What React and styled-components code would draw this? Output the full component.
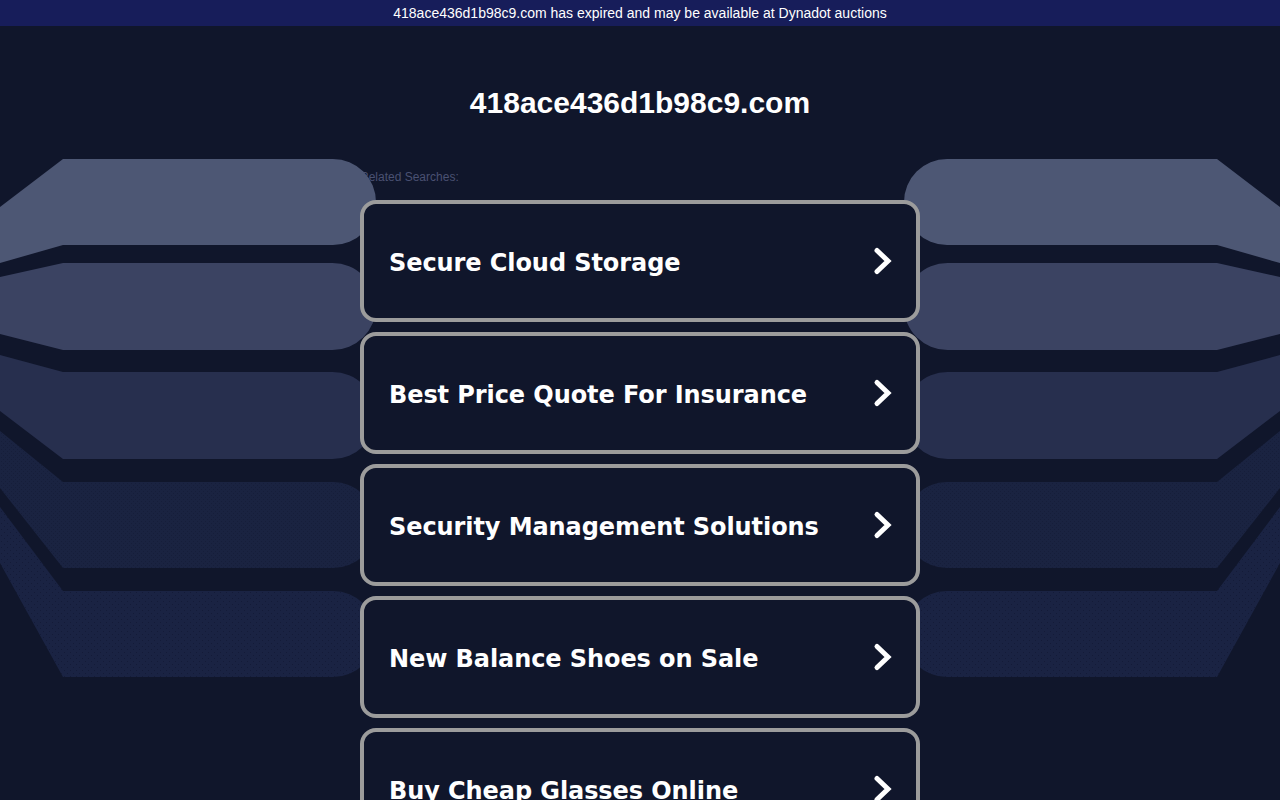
import React from 'react'
import styled, { createGlobalStyle } from 'styled-components'

const GlobalStyle = createGlobalStyle`
  html, body {
    margin: 0;
    height: 100%;
    overflow: hidden;
    background: #10162b;
  }
  * { box-sizing: border-box; }
`

const Page = styled.div`
  position: relative;
  width: 100%;
  height: 800px;
  overflow: hidden;
  background: #10162b;
  font-family: "Liberation Sans", Arial, sans-serif;
`
const TopBar = styled.div`
  height: 26px;
  line-height: 26px;
  text-align: center;
  font-size: 14px;
  color: #fff;
  background: #171d5a;
`
const DomainTitle = styled.h1`
  margin: 0;
  padding-top: 58px;
  height: 133px;
  line-height: 38px;
  text-align: center;
  font-size: 30px;
  font-weight: 700;
  color: #fff;
`
const Column = styled.main`
  width: 560px;
  margin: 0 auto;
`
const RelatedLabel = styled.div`
  height: 41px;
  padding-top: 11px;
  line-height: 14px;
  font-size: 12px;
  color: #4a5172;
`
const Results = styled.div`
  position: relative;
  z-index: 2;
  display: flex;
  flex-direction: column;
  gap: 10px;
`
const ResultCard = styled.a`
  display: flex;
  align-items: center;
  justify-content: space-between;
  height: 122px;
  padding: 4px 23px 0 25px;
  border: 4px solid #9c9c9c;
  border-radius: 16px;
  background: #10162b;
  color: #fff;
  font-family: "DejaVu Sans", Verdana, sans-serif;
  font-size: 24px;
  font-weight: 700;
  letter-spacing: -0.08px;
  text-decoration: none;
  cursor: pointer;
`
const ChevronIcon = styled.svg`
  flex: none;
  margin-top: -4px;
`
const Backdrop = styled.svg`
  position: absolute;
  top: 0;
  left: 0;
  z-index: 1;
  pointer-events: none;
`

const bands = [
  { top: 159, bottom: 245, leftTop: 207, leftBottom: 263, fill: '#4d5774' },
  { top: 263, bottom: 350, leftTop: 277, leftBottom: 334, fill: '#3b4362' },
  { top: 372, bottom: 459, leftTop: 355, leftBottom: 411, fill: '#272f4e' },
  { top: 482, bottom: 568, leftTop: 431, leftBottom: 488, fill: 'url(#dotsDense)' },
  { top: 591, bottom: 677, leftTop: 507, leftBottom: 563, fill: 'url(#dotsLoose)' },
]

const bandPath = ({ top, bottom, leftTop, leftBottom }) => {
  const r = (bottom - top) / 2
  return `M0 ${leftTop} L63 ${top} H${376 - r} A${r} ${r} 0 0 1 ${376 - r} ${bottom} H63 L0 ${leftBottom} Z`
}

const searches = [
  'Secure Cloud Storage',
  'Best Price Quote For Insurance',
  'Security Management Solutions',
  'New Balance Shoes on Sale',
  'Buy Cheap Glasses Online',
]

const Chevron = () => (
  <ChevronIcon width="20" height="30" viewBox="0 0 20 30" fill="none">
    <path d="M4 4.5 L15 15 L4 25.5" stroke="#fff" strokeWidth="5" strokeLinecap="round" strokeLinejoin="miter" />
  </ChevronIcon>
)

const App = () => {
  return (
    <Page>
      <GlobalStyle />
      <TopBar>418ace436d1b98c9.com has expired and may be available at Dynadot auctions</TopBar>
      <DomainTitle>418ace436d1b98c9.com</DomainTitle>
      <Column>
        <RelatedLabel>Related Searches:</RelatedLabel>
        <Results>
          {searches.map((text) => (
            <ResultCard key={text}>
              {text}
              <Chevron />
            </ResultCard>
          ))}
        </Results>
      </Column>
      <Backdrop width="1280" height="800" viewBox="0 0 1280 800">
        <defs>
          <pattern id="dotsDense" width="4" height="4" patternUnits="userSpaceOnUse">
            <rect width="4" height="4" fill="#1a2341" />
            <rect x="1" y="1" width="1" height="1" fill="#161e3a" />
            <rect x="3" y="3" width="1" height="1" fill="#161e3a" />
          </pattern>
          <pattern id="dotsLoose" width="6" height="6" patternUnits="userSpaceOnUse">
            <rect width="6" height="6" fill="#1a2343" />
            <rect x="1" y="1" width="1" height="1" fill="#141b38" />
            <rect x="4" y="4" width="1" height="1" fill="#141b38" />
          </pattern>
        </defs>
        {bands.map((b) => (
          <g key={b.top} fill={b.fill}>
            <path d={bandPath(b)} />
            <path d={bandPath(b)} transform="matrix(-1 0 0 1 1280 0)" />
          </g>
        ))}
      </Backdrop>
    </Page>
  )
}

export default App
